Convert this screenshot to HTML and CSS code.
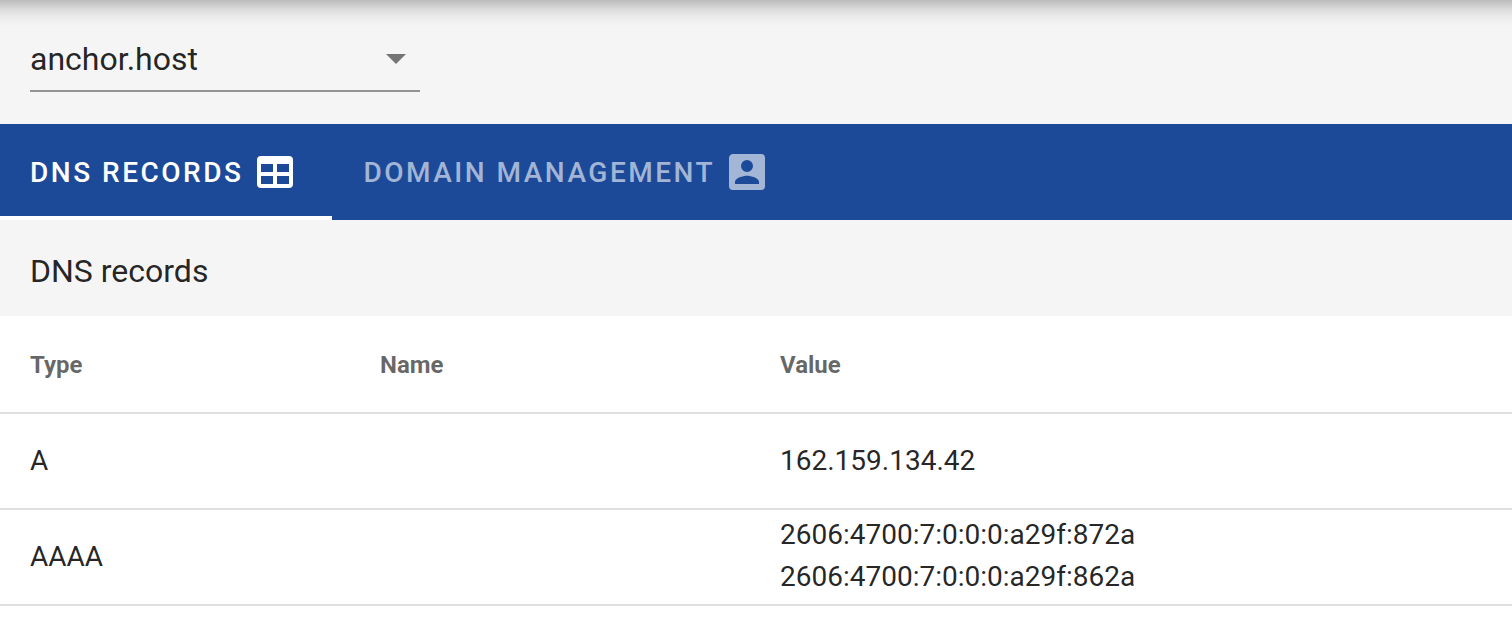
FILE: index.html
```html
<!DOCTYPE html>
<html lang="en">
<head>
<meta charset="utf-8">
<title>DNS records</title>
<link rel="stylesheet" href="styles.css">
</head>
<body>
<div class="topbar"></div>
<section class="selector">
  <div class="select">
    <span class="select-value">anchor.host</span>
    <svg class="select-arrow" width="20" height="10" viewBox="0 0 20 10"><path d="M0 0h20L10 10z"/></svg>
  </div>
</section>
<nav class="tabs">
  <a class="tab tab-active">DNS RECORDS
    <svg class="tab-icon" width="48" height="48" viewBox="0 0 24 24"><path d="M5,4H19A2,2 0 0,1 21,6V18A2,2 0 0,1 19,20H5A2,2 0 0,1 3,18V6A2,2 0 0,1 5,4M5,8V12H11V8H5M13,8V12H19V8H13M5,14V18H11V14H5M13,14V18H19V14H13Z"/></svg>
  </a>
  <a class="tab">DOMAIN MANAGEMENT
    <svg class="tab-icon" width="48" height="48" viewBox="0 0 24 24"><path d="M6,17C6,15 10,13.9 12,13.9C14,13.9 18,15 18,17V18H6M15,9A3,3 0 0,1 12,12A3,3 0 0,1 9,9A3,3 0 0,1 12,6A3,3 0 0,1 15,9M3,5V19A2,2 0 0,0 5,21H19A2,2 0 0,0 21,19V5A2,2 0 0,0 19,3H5C3.89,3 3,3.9 3,5Z"/></svg>
  </a>
</nav>
<h2 class="title">DNS records</h2>
<table class="records">
  <thead>
    <tr><th class="col-type">Type</th><th class="col-name">Name</th><th>Value</th></tr>
  </thead>
  <tbody>
    <tr><td>A</td><td></td><td>162.159.134.42</td></tr>
    <tr><td>AAAA</td><td></td><td class="multi">2606:4700:7:0:0:0:a29f:872a<br>2606:4700:7:0:0:0:a29f:862a</td></tr>
  </tbody>
</table>
</body>
</html>
```
FILE: styles.css
```css
* { box-sizing: border-box; }
html, body { margin: 0; background: #fff; }
body {
  font-family: Roboto, "Liberation Sans", sans-serif;
  color: rgba(0, 0, 0, 0.87);
  overflow: hidden;
}
.topbar {
  height: 0;
  box-shadow: 0 -40px 24px 40px rgba(0, 0, 0, 0.48);
  position: relative;
}
.selector {
  height: 124px;
  background: #f5f5f5;
  padding: 24px 30px 0;
}
.select {
  width: 390px;
  height: 68px;
  border-bottom: 2px solid #949494;
  display: flex;
  align-items: center;
  justify-content: space-between;
  padding: 4px 14px 0 0;
}
.select-value { font-size: 32px; line-height: 48px; }
.select-arrow { fill: #757575; display: block; }
.tabs {
  height: 96px;
  background: #1c4a99;
  display: flex;
}
.tab {
  height: 96px;
  padding: 0 32px 0 31px;
  display: flex;
  align-items: center;
  gap: 8px;
  font-size: 28px;
  font-weight: 500;
  letter-spacing: 2.500px;
  color: rgba(255, 255, 255, 0.6);
}
.tab-icon { fill: currentColor; display: block; }
.tab-active {
  padding: 0 33px 0 30px;
  color: #fff;
  box-shadow: inset 0 -4px 0 #fff;
}
.title {
  margin: 0;
  height: 96px;
  background: #f5f5f5;
  padding: 6px 30px 0;
  display: flex;
  align-items: center;
  font-size: 32px;
  font-weight: 400;
}
.records {
  width: 100%;
  border-collapse: separate;
  border-spacing: 0;
  table-layout: fixed;
  background: #fff;
}
.records th, .records td {
  padding: 0 30px;
  text-align: left;
  border-bottom: 2px solid #e0e0e0;
  height: 96px;
}
.records th {
  height: 98px;
  padding-top: 2px;
  font-size: 24px;
  font-weight: 700;
  color: rgba(0, 0, 0, 0.6);
}
.records td {
  font-size: 28px;
  line-height: 42px;
}
.records td.multi { padding-bottom: 2px; }
.col-type { width: 350px; }
.col-name { width: 400px; }
```
